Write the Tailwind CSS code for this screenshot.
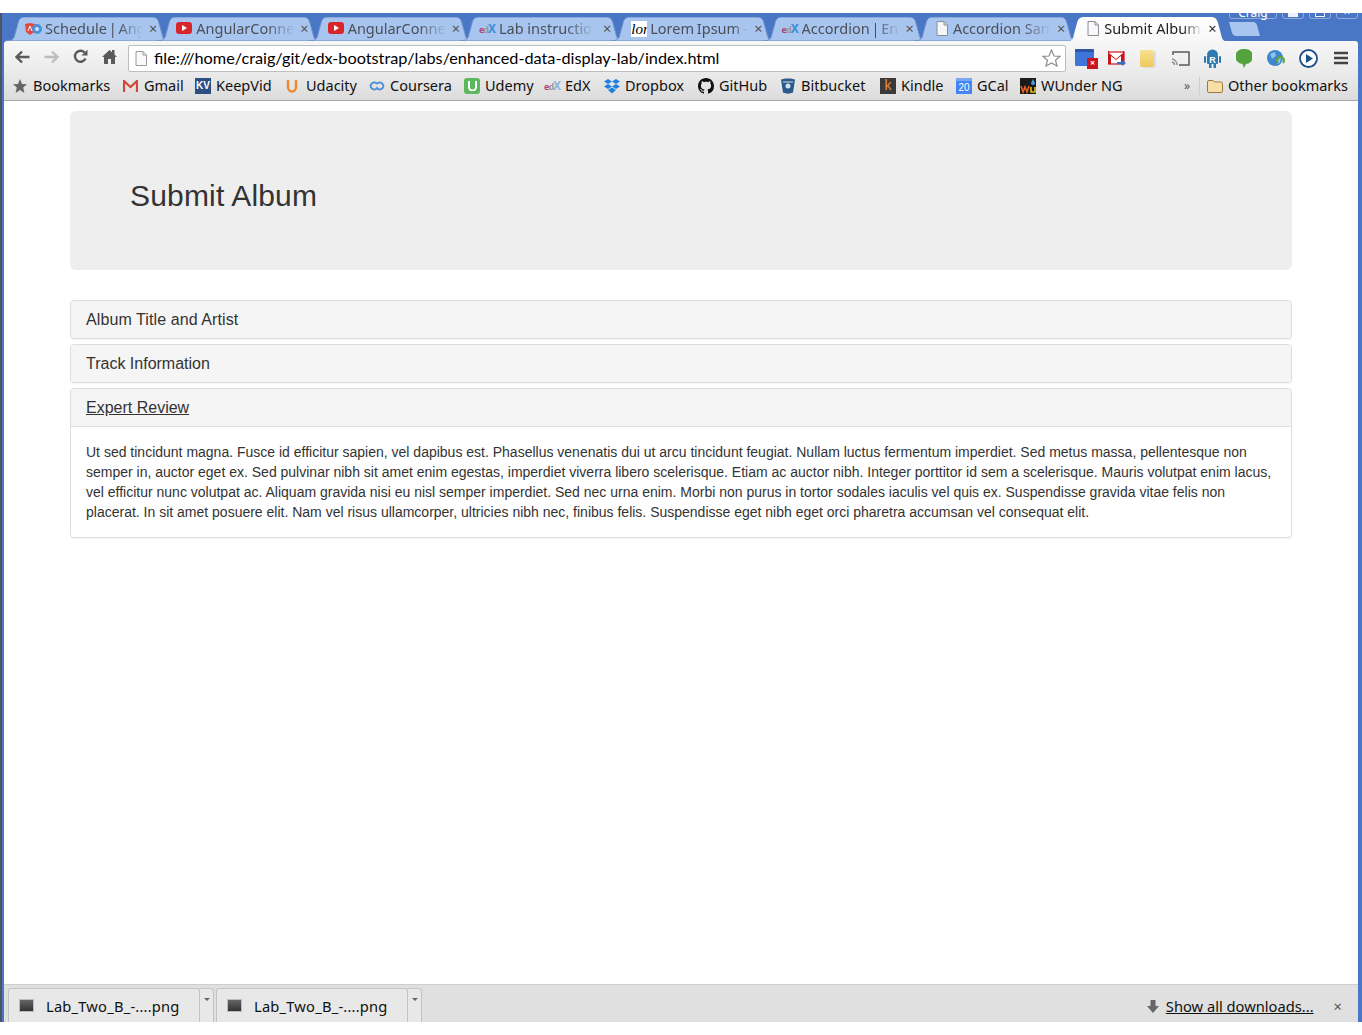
<!DOCTYPE html>
<html lang="en">
<head>
    <meta charset="UTF-8">
    <title>Submit Album</title>
    <script src="https://cdn.jsdelivr.net/npm/@tailwindcss/browser@4"></script>
</head>
<body class="bg-white overflow-hidden">
<div class="h-[1035px] w-[1362px] flex flex-col font-['Noto_Sans',sans-serif]">
    <div class="h-[13px] shrink-0"></div>
    <div class="h-[1009px] shrink-0 flex flex-col overflow-hidden bg-[#4a76c6] border-l-[2px] border-l-[#4c5566] pl-[2px] pr-[4px] relative">

        <!-- tab strip -->
        <div class="h-[28px] shrink-0 flex items-end pl-[2px] relative">
            <div class="relative w-[165px] h-[24px] shrink-0 text-[#4a4f57] text-[14.5px]">
                <svg class="absolute inset-0" width="165" height="24"><path d="M0 24C6 24 8 22 9 17L12 6C13 2 15 0 19 0H146C150 0 152 2 153 6L156 17C157 22 159 24 165 24Z" fill="#a8c5f0" stroke="#6d8fcc"/></svg>
                <svg class="absolute left-[19px] top-[6px]" width="17" height="12" viewBox="0 0 17 12"><path d="M0 1L5 0L10 1L9 9L5 12L1 9Z" fill="#e4473f"/><circle cx="12" cy="6" r="5" fill="#4a90d9"/><circle cx="12" cy="6" r="2" fill="#cfe3f8"/><path d="M3 8L5 3L7 8" fill="none" stroke="#fff"/></svg>
                <span class="absolute left-[39px] top-[1px] w-[98px] overflow-hidden whitespace-nowrap [word-spacing:-2px] [mask-image:linear-gradient(to_right,black_75%,transparent)]">Schedule | Ang</span>
                <span class="absolute left-[143px] top-[1px] text-[#555]">×</span>
            </div>
            <div class="relative w-[165px] h-[24px] shrink-0 -ml-[13.7px] text-[#4a4f57] text-[14.5px]">
                <svg class="absolute inset-0" width="165" height="24"><path d="M0 24C6 24 8 22 9 17L12 6C13 2 15 0 19 0H146C150 0 152 2 153 6L156 17C157 22 159 24 165 24Z" fill="#a8c5f0" stroke="#6d8fcc"/></svg>
                <svg class="absolute left-[19px] top-[5px]" width="16" height="12" viewBox="0 0 16 12"><rect width="16" height="12" rx="3" fill="#d9252a"/><path d="M6 3L11 6L6 9Z" fill="#fff"/></svg>
                <span class="absolute left-[39px] top-[1px] w-[100px] overflow-hidden whitespace-nowrap [mask-image:linear-gradient(to_right,black_70%,transparent)]">AngularConne</span>
                <span class="absolute left-[143px] top-[1px] text-[#555]">×</span>
            </div>
            <div class="relative w-[165px] h-[24px] shrink-0 -ml-[13.7px] text-[#4a4f57] text-[14.5px]">
                <svg class="absolute inset-0" width="165" height="24"><path d="M0 24C6 24 8 22 9 17L12 6C13 2 15 0 19 0H146C150 0 152 2 153 6L156 17C157 22 159 24 165 24Z" fill="#a8c5f0" stroke="#6d8fcc"/></svg>
                <svg class="absolute left-[19px] top-[5px]" width="16" height="12" viewBox="0 0 16 12"><rect width="16" height="12" rx="3" fill="#d9252a"/><path d="M6 3L11 6L6 9Z" fill="#fff"/></svg>
                <span class="absolute left-[39px] top-[1px] w-[100px] overflow-hidden whitespace-nowrap [mask-image:linear-gradient(to_right,black_70%,transparent)]">AngularConne</span>
                <span class="absolute left-[143px] top-[1px] text-[#555]">×</span>
            </div>
            <div class="relative w-[165px] h-[24px] shrink-0 -ml-[13.7px] text-[#4a4f57] text-[14.5px]">
                <svg class="absolute inset-0" width="165" height="24"><path d="M0 24C6 24 8 22 9 17L12 6C13 2 15 0 19 0H146C150 0 152 2 153 6L156 17C157 22 159 24 165 24Z" fill="#a8c5f0" stroke="#6d8fcc"/></svg>
                <span class="absolute left-[19px] top-[7px] w-[17px] h-[11px] text-[9px] leading-[10px] font-bold tracking-[-1px] text-[#b0417e]">e<span class="text-[#999]">d</span><span class="text-[12px] text-[#3d8fd6]">X</span></span>
                <span class="absolute left-[39px] top-[1px] w-[96px] overflow-hidden whitespace-nowrap [mask-image:linear-gradient(to_right,black_70%,transparent)]">Lab instructio</span>
                <span class="absolute left-[143px] top-[1px] text-[#555]">×</span>
            </div>
            <div class="relative w-[165px] h-[24px] shrink-0 -ml-[13.7px] text-[#4a4f57] text-[14.5px]">
                <svg class="absolute inset-0" width="165" height="24"><path d="M0 24C6 24 8 22 9 17L12 6C13 2 15 0 19 0H146C150 0 152 2 153 6L156 17C157 22 159 24 165 24Z" fill="#a8c5f0" stroke="#6d8fcc"/></svg>
                <span class="absolute left-[20px] top-[4px] w-[16px] h-[16px] bg-white text-black text-[15px] leading-[16px] italic font-['Liberation_Serif',serif] overflow-hidden">lor</span>
                <span class="absolute left-[39px] top-[1px] w-[98px] overflow-hidden whitespace-nowrap [word-spacing:-1px] [mask-image:linear-gradient(to_right,black_85%,transparent)]">Lorem Ipsum -</span>
                <span class="absolute left-[143px] top-[1px] text-[#555]">×</span>
            </div>
            <div class="relative w-[165px] h-[24px] shrink-0 -ml-[13.7px] text-[#4a4f57] text-[14.5px]">
                <svg class="absolute inset-0" width="165" height="24"><path d="M0 24C6 24 8 22 9 17L12 6C13 2 15 0 19 0H146C150 0 152 2 153 6L156 17C157 22 159 24 165 24Z" fill="#a8c5f0" stroke="#6d8fcc"/></svg>
                <span class="absolute left-[19px] top-[7px] w-[17px] h-[11px] text-[9px] leading-[10px] font-bold tracking-[-1px] text-[#b0417e]">e<span class="text-[#999]">d</span><span class="text-[12px] text-[#3d8fd6]">X</span></span>
                <span class="absolute left-[39px] top-[1px] w-[98px] overflow-hidden whitespace-nowrap [word-spacing:-2px] [mask-image:linear-gradient(to_right,black_75%,transparent)]">Accordion | En</span>
                <span class="absolute left-[143px] top-[1px] text-[#555]">×</span>
            </div>
            <div class="relative w-[165px] h-[24px] shrink-0 -ml-[13.7px] text-[#4a4f57] text-[14.5px]">
                <svg class="absolute inset-0" width="165" height="24"><path d="M0 24C6 24 8 22 9 17L12 6C13 2 15 0 19 0H146C150 0 152 2 153 6L156 17C157 22 159 24 165 24Z" fill="#a8c5f0" stroke="#6d8fcc"/></svg>
                <svg class="absolute left-[22px] top-[4px]" width="12" height="15" viewBox="0 0 12 15"><path d="M1 .5H8L11.5 4V14.5H1Z" fill="#f5f5f5" stroke="#8a8f96"/><path d="M8 .5V4H11.5" fill="none" stroke="#8a8f96"/></svg>
                <span class="absolute left-[39px] top-[1px] w-[98px] overflow-hidden whitespace-nowrap [mask-image:linear-gradient(to_right,black_70%,transparent)]">Accordion San</span>
                <span class="absolute left-[143px] top-[1px] text-[#555]">×</span>
            </div>
            <!-- active tab -->
            <div class="relative w-[165px] h-[25px] shrink-0 -ml-[13.7px] -mb-[1px] z-10 text-[#222] text-[14.5px]">
                <svg class="absolute inset-0" width="165" height="25"><path d="M0 25C6 25 8 23 9 17L12 6C13 2 15 0 19 0H146C150 0 152 2 153 6L156 17C157 23 159 25 165 25Z" fill="url(#activeTab)"/><defs><linearGradient id="activeTab" x1="0" y1="0" x2="0" y2="1"><stop offset="0" stop-color="#ffffff"/><stop offset="1" stop-color="#f7f7f7"/></linearGradient></defs></svg>
                <svg class="absolute left-[22px] top-[4px]" width="12" height="15" viewBox="0 0 12 15"><path d="M1 .5H8L11.5 4V14.5H1Z" fill="#f8f8f8" stroke="#8a8f96"/><path d="M8 .5V4H11.5" fill="none" stroke="#8a8f96"/></svg>
                <span class="absolute left-[39px] top-[1px] w-[98px] overflow-hidden whitespace-nowrap [mask-image:linear-gradient(to_right,black_80%,transparent)]">Submit Album</span>
                <span class="absolute left-[143px] top-[1px] text-[#333]">×</span>
            </div>
            <svg class="-ml-[1px] mb-[5px] shrink-0" width="32" height="14" viewBox="0 0 32 14"><path d="M0 0H24C26 0 27 1 28 3L31 14H7C5 14 4 13 3 11Z" fill="#a8c5f0"/></svg>
            <!-- window owner and caption buttons, cut off by the top of the frame -->
            <div class="absolute right-[81px] -top-[6px] w-[48px] h-[12px] rounded-b-[3px] border border-[#8fa9d8] text-white text-[12px] leading-[9px] text-center">Craig</div>
            <div class="absolute right-[54px] -top-[6px] w-[22px] h-[12px] rounded-b-[3px] border border-[#8fa9d8] flex justify-center"><span class="w-[10px] h-[9px] bg-white/90"></span></div>
            <div class="absolute right-[27px] -top-[6px] w-[22px] h-[12px] rounded-b-[3px] border border-[#8fa9d8] flex justify-center"><span class="w-[10px] h-[9px] border border-white/90"></span></div>
            <div class="absolute right-0 -top-[6px] w-[22px] h-[12px] rounded-b-[3px] border border-[#8fa9d8] text-white text-[12px] leading-[8px] text-center">×</div>
        </div>

        <!-- toolbar -->
        <div class="h-[31px] shrink-0 flex items-center bg-gradient-to-b from-[#f7f7f7] to-[#ebebeb] rounded-t-[3px] relative">
            <div class="w-[124px] flex items-center pl-[11px] gap-[14px] text-[#555]">
                <svg width="15" height="14" viewBox="0 0 15 14"><path d="M14.5 7H2M7 1.5L1.5 7L7 12.5" fill="none" stroke="#5a5a5a" stroke-width="2.4"/></svg>
                <svg width="15" height="14" viewBox="0 0 15 14"><path d="M.5 7H13M8 1.5L13.5 7L8 12.5" fill="none" stroke="#bdbdbd" stroke-width="2.4"/></svg>
                <svg width="15" height="15" viewBox="0 0 15 15"><path d="M12.5 9.5A5.5 5.5 0 1 1 11.5 3.5" fill="none" stroke="#5a5a5a" stroke-width="2.4"/><path d="M8.5 6.5H14.5V.5Z" fill="#5a5a5a"/></svg>
                <svg width="15" height="15" viewBox="0 0 15 15"><path d="M0 8L7.5 1L10 3.3V1H12.5V5.6L15 8L13 8V15H9V10H6V15H2V8Z" fill="#5a5a5a"/></svg>
            </div>
            <div class="w-[938px] h-[27px] shrink-0 mt-[3px] bg-white border border-[#bdbdbd] rounded-[2px] flex items-center pl-[6px] pr-[4px]">
                <svg width="12" height="15" viewBox="0 0 12 15"><path d="M1 .5H8L11.5 4V14.5H1Z" fill="#fafafa" stroke="#9a9a9a"/><path d="M8 .5V4H11.5" fill="none" stroke="#9a9a9a"/></svg>
                <span class="ml-[7px] text-[16.25px] text-black whitespace-nowrap font-['Lato',sans-serif]">file:///home/craig/git/edx-bootstrap/labs/enhanced-data-display-lab/index.html</span>
                <svg class="ml-auto" width="19" height="18" viewBox="0 0 19 18"><path d="M9.5 1L12 7L18 7.3L13.5 11.2L15 17L9.5 14L4 17L5.5 11.2L1 7.3L7 7Z" fill="#fff" stroke="#8d8d8d" stroke-width="1.2"/></svg>
            </div>
            <div class="flex-1 relative h-full">
                <!-- extension icons -->
                <div class="absolute left-[9px] top-[8px] w-[23px] h-[20px]">
                    <div class="w-[19px] h-[17px] bg-[#3f74d9] rounded-[1px] border-t-[3px] border-t-[#2c55a6]"></div>
                    <div class="absolute right-0 bottom-0 w-[11px] h-[11px] bg-[#c8161d] text-white text-[9px] leading-[10px] text-center font-bold">×</div>
                </div>
                <svg class="absolute left-[42px] top-[10px]" width="18" height="15" viewBox="0 0 18 15"><rect y="1" width="16" height="12" fill="#fff" stroke="#c8161d" stroke-width="1.2"/><path d="M1 2L8 8L15 2V0H16V13H13V5L8 9L3 5V13H0V0H1Z" fill="#c8161d"/><path d="M9 11H14V9L18 12L14 15V13H9Z" fill="#3a6fc0"/></svg>
                <div class="absolute left-[74px] top-[9px] w-[14px] h-[17px] rounded-[2px] bg-gradient-to-b from-[#f7e08e] to-[#eec95c] shadow-[2px_1px_1px_#ddd]"></div>
                <svg class="absolute left-[105px] top-[10px]" width="19" height="15" viewBox="0 0 19 15"><path d="M2 4V1H18V14H8" fill="none" stroke="#5a5a5a" stroke-width="1.5"/><path d="M1 8A6 6 0 0 1 6 14M1 11A3 3 0 0 1 3.5 14" fill="none" stroke="#8a8a8a" stroke-width="1.3"/></svg>
                <svg class="absolute left-[138px] top-[8px]" width="17" height="19" viewBox="0 0 17 19"><path d="M3 6A5.5 5.5 0 0 1 14 6Z" fill="#2c7ab0"/><rect x="3" y="6" width="11" height="9" rx="1" fill="#2c7ab0"/><rect x="0" y="7" width="2" height="7" rx="1" fill="#2c7ab0"/><rect x="15" y="7" width="2" height="7" rx="1" fill="#2c7ab0"/><rect x="5" y="15" width="2.5" height="4" fill="#2c7ab0"/><rect x="9.5" y="15" width="2.5" height="4" fill="#2c7ab0"/><text x="8.5" y="14" text-anchor="middle" font-size="9" font-weight="700" fill="#fff" font-family="Liberation Sans">R</text></svg>
                <svg class="absolute left-[170px] top-[8px]" width="16" height="19" viewBox="0 0 16 19"><path d="M8 0A8 7.5 0 0 1 10 15L8 19L6.5 15A8 7.5 0 0 1 8 0Z" fill="#55a33e"/></svg>
                <svg class="absolute left-[201px] top-[9px]" width="18" height="17" viewBox="0 0 18 17"><circle cx="8" cy="8" r="8" fill="#3f86cf"/><path d="M3 4L8 2L9 6L5 9Z M10 9L14 8L13 13L10 14Z" fill="#8cc3ee"/><path d="M11 13A3.5 3.5 0 1 1 16 13" fill="none" stroke="#5aa832" stroke-width="2"/></svg>
                <svg class="absolute left-[233px] top-[8px]" width="19" height="19" viewBox="0 0 19 19"><circle cx="9.5" cy="9.5" r="8.5" fill="#fff" stroke="#1e4f86" stroke-width="1.8"/><path d="M7 5L14 9.5L7 14Z" fill="#1e4f86"/></svg>
                <svg class="absolute left-[268px] top-[10px]" width="14" height="14" viewBox="0 0 14 14"><path d="M0 2H14M0 7H14M0 12H14" stroke="#444" stroke-width="2.6"/></svg>
            </div>
        </div>

        <!-- bookmarks bar -->
        <div class="h-[29px] shrink-0 flex items-center bg-gradient-to-b from-[#ebebeb] to-[#dcdcdc] border-b border-b-[#a8a8a8] text-[14.5px] text-[#111] pl-[9px]">
            <div class="w-[110px] flex items-center gap-[6px] shrink-0">
                <svg width="14" height="14" viewBox="0 0 14 14"><path d="M7 0L9 5L14 5.3L10.2 8.5L11.4 14L7 11L2.6 14L3.8 8.5L0 5.3L5 5Z" fill="#666"/></svg>
                <span>Bookmarks</span>
            </div>
            <div class="w-[72px] flex items-center gap-[6px] shrink-0">
                <svg width="15" height="12" viewBox="0 0 15 12"><path d="M1 12V1L7.5 7L14 1V12" fill="none" stroke="#d14836" stroke-width="2.2"/></svg>
                <span>Gmail</span>
            </div>
            <div class="w-[91px] flex items-center gap-[5px] shrink-0">
                <span class="w-[16px] h-[16px] bg-[#2d4f84] text-white text-[10px] leading-[16px] text-center font-bold font-['Liberation_Sans',sans-serif]">KV</span>
                <span>KeepVid</span>
            </div>
            <div class="w-[83px] flex items-center gap-[8px] shrink-0">
                <svg width="12" height="14" viewBox="0 0 12 14"><path d="M2 1V8A4 4.5 0 0 0 10 8V1" fill="none" stroke="#f0882d" stroke-width="2.4"/></svg>
                <span>Udacity</span>
            </div>
            <div class="w-[95px] flex items-center gap-[5px] shrink-0">
                <svg width="16" height="10" viewBox="0 0 16 10"><path d="M8 3A3.5 3.5 0 1 0 8 7A3.5 3.5 0 1 0 8 3" fill="none" stroke="#4f94d6" stroke-width="2"/></svg>
                <span>Coursera</span>
            </div>
            <div class="w-[80px] flex items-center gap-[5px] shrink-0">
                <span class="w-[16px] h-[16px] rounded-[3px] bg-[#5cb85c] flex items-center justify-center"><svg width="9" height="10" viewBox="0 0 9 10"><path d="M1 0V6A3.5 3.5 0 0 0 8 6V0" fill="none" stroke="#fff" stroke-width="2"/></svg></span>
                <span>Udemy</span>
            </div>
            <div class="w-[60px] flex items-center gap-[4px] shrink-0">
                <span class="w-[17px] text-[9px] leading-[10px] font-bold tracking-[-1px] text-[#b0417e]">e<span class="text-[#999]">d</span><span class="text-[12px] text-[#8fb4dc]">X</span></span>
                <span>EdX</span>
            </div>
            <div class="w-[94px] flex items-center gap-[5px] shrink-0">
                <svg width="16" height="15" viewBox="0 0 16 15"><path d="M4 0L8 2.5L4 5L0 2.5ZM12 0L16 2.5L12 5L8 2.5ZM4 5L8 7.5L4 10L0 7.5ZM12 5L16 7.5L12 10L8 7.5ZM4 11L8 8.5L12 11L8 14.5Z" fill="#1f82e0"/></svg>
                <span>Dropbox</span>
            </div>
            <div class="w-[83px] flex items-center gap-[5px] shrink-0">
                <svg width="16" height="16" viewBox="0 0 16 16"><path fill="#111" d="M8 0C3.58 0 0 3.58 0 8c0 3.54 2.29 6.53 5.47 7.59.4.07.55-.17.55-.38 0-.19-.01-.82-.01-1.49-2.01.37-2.53-.49-2.69-.94-.09-.23-.48-.94-.82-1.13-.28-.15-.68-.52-.01-.53.63-.01 1.08.58 1.23.82.72 1.21 1.87.87 2.33.66.07-.52.28-.87.51-1.07-1.78-.2-3.64-.89-3.64-3.95 0-.87.31-1.59.82-2.15-.08-.2-.36-1.02.08-2.12 0 0 .67-.21 2.2.82.64-.18 1.32-.27 2-.27s1.36.09 2 .27c1.53-1.04 2.2-.82 2.2-.82.44 1.1.16 1.92.08 2.12.51.56.82 1.27.82 2.15 0 3.07-1.87 3.75-3.65 3.95.29.25.54.73.54 1.48 0 1.07-.01 1.93-.01 2.2 0 .21.15.46.55.38A8.01 8.01 0 0 0 16 8c0-4.42-3.58-8-8-8z"/></svg>
                <span>GitHub</span>
            </div>
            <div class="w-[99px] flex items-center gap-[6px] shrink-0">
                <svg width="14" height="16" viewBox="0 0 14 16"><path d="M0 1.5C3 0 11 0 14 1.5L12 14.5C9 16 5 16 2 14.5Z" fill="#2a5a8c"/><circle cx="7" cy="8" r="2.5" fill="#cfe0ef"/><path d="M2 4H12" stroke="#cfe0ef"/></svg>
                <span>Bitbucket</span>
            </div>
            <div class="w-[76px] flex items-center gap-[5px] shrink-0">
                <span class="w-[16px] h-[16px] bg-[#3a3a3a] text-[#e8922c] text-[14px] leading-[15px] text-center font-['Liberation_Sans',sans-serif]">k</span>
                <span>Kindle</span>
            </div>
            <div class="w-[64px] flex items-center gap-[5px] shrink-0">
                <span class="w-[16px] h-[16px] bg-[#4285f4] text-white text-[10px] leading-[18px] text-center border-t-[3px] border-t-[#7aa8f5] font-['Liberation_Sans',sans-serif]"><span class="block -mt-[2px]">20</span></span>
                <span>GCal</span>
            </div>
            <div class="w-[164px] flex items-center gap-[5px] shrink-0">
                <svg width="16" height="16" viewBox="0 0 16 16"><rect width="16" height="16" fill="#1a1a1a"/><path d="M1 8L3 14L5 9L7 14L9 8" fill="none" stroke="#e8601c" stroke-width="1.6"/><path d="M11 9V14H15V9" fill="none" stroke="#e8c01c" stroke-width="1.6"/><path d="M13 1L15 5A2 2 0 0 1 11 5Z" fill="#3fa0e0"/></svg>
                <span>WUnder NG</span>
            </div>
            <span class="w-[15px] text-[12px] text-[#555] shrink-0 -mt-[1px]">»</span>
            <div class="w-[1px] h-[18px] bg-[#cfcfcf] shrink-0 mr-[7px]"></div>
            <div class="flex items-center gap-[5px] shrink-0">
                <svg width="16" height="13" viewBox="0 0 16 13"><path d="M.5 2A1.5 1.5 0 0 1 2 .5H6L7.5 2H14A1.5 1.5 0 0 1 15.5 3.5V11A1.5 1.5 0 0 1 14 12.5H2A1.5 1.5 0 0 1 .5 11Z" fill="#f8dfa6" stroke="#9a7d3e"/></svg>
                <span>Other bookmarks</span>
            </div>
        </div>

        <!-- page -->
        <div class="flex-1 min-h-0 bg-white px-[66px] pt-[10px] font-['Liberation_Sans',sans-serif] text-[14px] leading-[20px] text-[#333]">
            <div class="h-[159px] bg-[#eeeeee] rounded-[6px] pl-[60px] pt-[68px] mb-[30px]">
                <h2 class="text-[30px] leading-[33px] font-normal tracking-[0.17px]">Submit Album</h2>
            </div>
            <div class="flex flex-col gap-[5px]">
                <div class="border border-[#dddddd] rounded-[4px] shadow-[0_1px_1px_rgba(0,0,0,0.05)] bg-white">
                    <div class="h-[37px] bg-[#f5f5f5] rounded-[3px] px-[15px] flex items-center text-[16px] tracking-[0.09px]">Album Title and Artist</div>
                </div>
                <div class="border border-[#dddddd] rounded-[4px] shadow-[0_1px_1px_rgba(0,0,0,0.05)] bg-white">
                    <div class="h-[37px] bg-[#f5f5f5] rounded-[3px] px-[15px] flex items-center text-[16px]">Track Information</div>
                </div>
                <div class="border border-[#dddddd] rounded-[4px] shadow-[0_1px_1px_rgba(0,0,0,0.05)] bg-white">
                    <div class="h-[38px] bg-[#f5f5f5] rounded-t-[3px] border-b border-b-[#dddddd] px-[15px] flex items-center text-[16px]"><a href="#" class="underline">Expert Review</a></div>
                    <div class="p-[15px]">Ut sed tincidunt magna. Fusce id efficitur sapien, vel dapibus est. Phasellus venenatis dui ut arcu tincidunt feugiat. Nullam luctus fermentum imperdiet. Sed metus massa, pellentesque non semper in, auctor eget ex. Sed pulvinar nibh sit amet enim egestas, imperdiet viverra libero scelerisque. Etiam ac auctor nibh. Integer porttitor id sem a scelerisque. Mauris volutpat enim lacus, vel efficitur nunc volutpat ac. Aliquam gravida nisi eu nisl semper imperdiet. Sed nec urna enim. Morbi non purus in tortor sodales iaculis vel quis ex. Suspendisse gravida vitae felis non placerat. In sit amet posuere elit. Nam vel risus ullamcorper, ultricies nibh nec, finibus felis. Suspendisse eget nibh eget orci pharetra accumsan vel consequat elit.</div>
                </div>
            </div>
        </div>

        <!-- downloads shelf -->
        <div class="h-[38px] shrink-0 bg-[#e0e0e0] border-t border-t-[#cfcfcf] flex pl-[4px] pt-[3px] text-[14.7px] text-[#111]">
            <div class="w-[192px] bg-[#e8e8e8] border border-[#c4c4c4] border-b-0 rounded-t-[3px] flex items-start pl-[10px] pt-[9px] gap-[12px] shrink-0">
                <span class="w-[15px] h-[13px] bg-gradient-to-b from-[#666] to-[#333] border border-[#bbb] mt-[1px] shrink-0"></span>
                <span class="-mt-[3px] whitespace-nowrap tracking-[0.2px]">Lab_Two_B_-....png</span>
            </div>
            <div class="w-[14px] bg-[#e8e8e8] border border-l-0 border-[#c4c4c4] border-b-0 rounded-tr-[3px] flex justify-center pt-[9px] shrink-0"><span class="w-0 h-0 border-l-[3px] border-r-[3px] border-t-[3px] border-l-transparent border-r-transparent border-t-[#666]"></span></div>
            <div class="w-[192px] ml-[2px] bg-[#e8e8e8] border border-[#c4c4c4] border-b-0 rounded-t-[3px] flex items-start pl-[10px] pt-[9px] gap-[12px] shrink-0">
                <span class="w-[15px] h-[13px] bg-gradient-to-b from-[#666] to-[#333] border border-[#bbb] mt-[1px] shrink-0"></span>
                <span class="-mt-[3px] whitespace-nowrap tracking-[0.2px]">Lab_Two_B_-....png</span>
            </div>
            <div class="w-[14px] bg-[#e8e8e8] border border-l-0 border-[#c4c4c4] border-b-0 rounded-tr-[3px] flex justify-center pt-[9px] shrink-0"><span class="w-0 h-0 border-l-[3px] border-r-[3px] border-t-[3px] border-l-transparent border-r-transparent border-t-[#666]"></span></div>
            <div class="ml-auto flex items-start pt-[7px] pr-[16px]">
                <svg class="mt-[5px] mr-[7px]" width="12" height="13" viewBox="0 0 12 13"><path d="M3.5 0H8.5V6H12L6 13L0 6H3.5Z" fill="#666"/></svg>
                <a href="#" class="underline whitespace-nowrap">Show all downloads...</a>
                <span class="ml-[20px] text-[#555]">×</span>
            </div>
        </div>
    </div>
    <div class="flex-1"></div>
</div>
</body>
</html>
